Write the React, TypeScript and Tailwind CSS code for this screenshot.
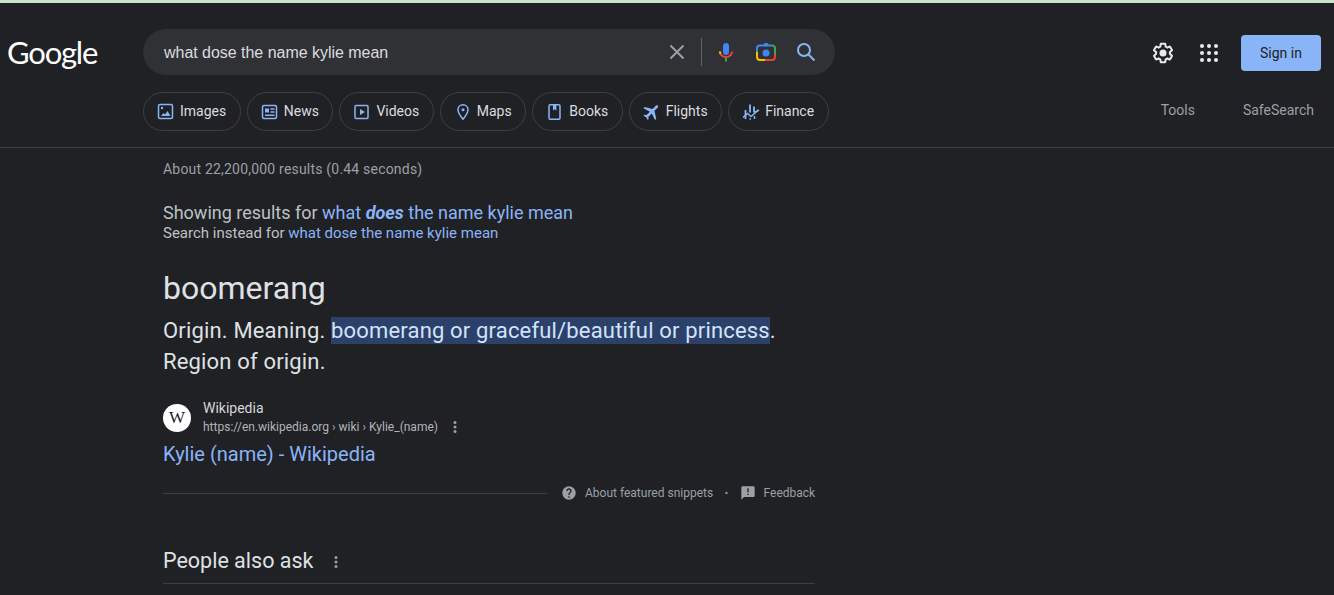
const ACCENT = "#8ab4f8";

const ImagesIcon = () => (
  <svg width="18" height="18" viewBox="0 0 18 18" fill="none">
    <rect x="1.500" y="1.500" width="14" height="14" rx="1.500" stroke={ACCENT} strokeWidth="1.500" />
    <circle cx="5" cy="5" r="1.200" fill={ACCENT} />
    <path d="M4 13l2.500-3 1.500 1.500L10.500 8 13.500 13z" fill={ACCENT} />
  </svg>
);

const NewsIcon = () => (
  <svg width="18" height="18" viewBox="0 0 18 18" fill="none">
    <rect x="1.500" y="2.500" width="14" height="13" rx="1.500" stroke={ACCENT} strokeWidth="1.500" />
    <rect x="4" y="5.500" width="4" height="4" fill={ACCENT} />
    <path d="M9.500 6h4M9.500 9h4M4 12.200h9.500" stroke={ACCENT} strokeWidth="1.500" />
  </svg>
);

const VideosIcon = () => (
  <svg width="18" height="18" viewBox="0 0 18 18" fill="none">
    <rect x="2" y="2.500" width="13" height="13" rx="1" stroke={ACCENT} strokeWidth="1.500" />
    <path d="M7 6l5 3-5 3z" fill={ACCENT} />
  </svg>
);

const MapsIcon = () => (
  <svg width="18" height="18" viewBox="0 0 18 18" fill="none">
    <path d="M9 1.800c-2.900 0-5 2.200-5 5 0 3.400 5 9.400 5 9.400s5-6 5-9.400c0-2.800-2.100-5-5-5z" stroke={ACCENT} strokeWidth="1.500" />
    <circle cx="9" cy="6.800" r="1.500" fill={ACCENT} />
  </svg>
);

const BooksIcon = () => (
  <svg width="18" height="18" viewBox="0 0 18 18" fill="none">
    <rect x="3" y="1.800" width="11" height="14.500" rx="1.200" stroke={ACCENT} strokeWidth="1.500" />
    <path d="M7 2v5.500l1.700-1.200 1.700 1.200V2z" fill={ACCENT} />
  </svg>
);

const FlightsIcon = () => (
  <svg width="18" height="18" viewBox="0 0 24 24" fill={ACCENT}>
    <path transform="rotate(45 12 12) translate(-1.800 -1.800) scale(1.150)" d="M21 16v-2l-8-5V3.500c0-.83-.67-1.500-1.500-1.500S10 2.670 10 3.500V9l-8 5v2l8-2.500V19l-2 1.500V22l3.500-1 3.500 1v-1.500L13 19v-5.500l8 2.500z" />
  </svg>
);

const FinanceIcon = () => (
  <svg width="18" height="18" viewBox="0 0 18 18" fill="none" stroke={ACCENT} strokeWidth="1.800">
    <path d="M3.500 7v9M8 1.500v8M12 3.500v6" />
    <path d="M1 14.500l4.500-4 3.500 3L16.500 7" strokeWidth="1.500" />
    <path d="M12.500 9.500L17 7M7.500 16h1.500M12.500 13v3" strokeWidth="1.500" />
  </svg>
);

const Chip = ({ label, icon }: { label: string; icon: React.ReactNode }) => (
  <a className="flex h-[39px] items-center gap-[5px] rounded-full border border-[#3c4043] pl-[13px] pr-[13.500px] text-[14px] text-[#dadce0]">
    {icon}
    <span>{label}</span>
  </a>
);

const Dots = ({ className }: { className?: string }) => (
  <svg className={className} width="14" height="14" viewBox="0 0 14 14" fill="#9aa0a6">
    <circle cx="7" cy="2.500" r="1.500" />
    <circle cx="7" cy="7" r="1.500" />
    <circle cx="7" cy="11.500" r="1.500" />
  </svg>
);

export default function App() {
  return (
    <div className="h-[595px] overflow-hidden bg-[#202124] font-['Roboto',sans-serif]">
      <div className="h-[3px] bg-[#c8e6c9]" />
      <header className="h-[145px] border-b border-[#3c4043] pt-[26px]">
        <div className="flex h-[46px] items-center">
          <div className="w-[143px] pl-[7px] font-['Lato',sans-serif] text-[31px] leading-none tracking-[-1.200px] text-white">
            Google
          </div>
          <div className="flex h-[46px] w-[692px] items-center rounded-full bg-[#303134] pl-[21px] pr-[17px]">
            <span className="flex-1 pt-px font-['Liberation_Sans',sans-serif] text-[16px] tracking-[-0.030px] text-[#dadce0]">
              what dose the name kylie mean
            </span>
            <svg width="24" height="24" viewBox="0 0 24 24" fill="none" stroke="#9aa0a6" strokeWidth="2">
              <path d="M5.500 5.500l13 13M18.500 5.500l-13 13" />
            </svg>
            <div className="ml-[12px] mr-[12px] h-[28px] w-px bg-[#5f6368]" />
            <svg width="24" height="24" viewBox="0 0 24 24">
              <path d="M12 15c1.700 0 3-1.300 3-3V6c0-1.700-1.300-3-3-3S9 4.300 9 6v6c0 1.700 1.300 3 3 3z" fill="#4285f4" />
              <path d="M5 11.500c0 3.700 3.100 6.500 7 6.500s7-2.800 7-6.500h-2c0 2.600-2.200 4.500-5 4.500s-5-1.900-5-4.500z" fill="#ea4335" />
              <path d="M5 11.500h2c0 .6.100 1.200.4 1.700l-1.700 1c-.4-.8-.7-1.700-.7-2.700z" fill="#fbbc04" />
              <rect x="11" y="18" width="2" height="3.500" fill="#34a853" />
            </svg>
            <svg className="ml-[16px]" width="24" height="24" viewBox="0 0 24 24" fill="none">
              <circle cx="12" cy="13" r="3.500" fill="#4285f4" />
              <path d="M9 5.500l1.500-2.500h3L15 5.500" fill="#4285f4" />
              <path d="M3 12V8c0-1.400 1.100-2.500 2.500-2.500H18" stroke="#4285f4" strokeWidth="2" />
              <path d="M3 12v4.500C3 18.400 4.100 20 6 20h5" stroke="#fbbc04" strokeWidth="2" />
              <path d="M11 20h7c1.900 0 3-1.600 3-3.500V14" stroke="#ea4335" strokeWidth="2" />
              <path d="M18 5.500c1.900 0 3 1.100 3 2.500v6" stroke="#34a853" strokeWidth="2" />
            </svg>
            <svg className="ml-[16px]" width="24" height="24" viewBox="0 0 24 24" fill="none" stroke={ACCENT} strokeWidth="2">
              <circle cx="10" cy="10" r="6" />
              <path d="M14.500 14.500l6 6" />
            </svg>
          </div>
          <div className="ml-auto flex items-center pr-[13px] pt-[2px]">
            <svg width="24" height="24" viewBox="0 0 24 24" fill="#e8eaed">
              <path d="M13.850 22.250h-3.700c-.74 0-1.360-.54-1.450-1.270l-.27-1.890c-.27-.14-.53-.29-.79-.46l-1.800.72c-.7.260-1.470-.03-1.810-.65L2.200 15.530c-.35-.66-.2-1.440.36-1.880l1.530-1.190c-.01-.15-.02-.3-.02-.46 0-.15.01-.31.02-.46l-1.520-1.190c-.59-.45-.74-1.260-.37-1.880l1.850-3.190c.34-.62 1.110-.9 1.790-.63l1.810.73c.26-.17.520-.32.780-.46l.27-1.910c.09-.7.710-1.250 1.440-1.250h3.700c.74 0 1.360.54 1.450 1.270l.27 1.890c.27.140.53.290.79.46l1.800-.72c.71-.26 1.480.03 1.820.65l1.840 3.180c.36.660.2 1.440-.36 1.880l-1.520 1.190c.01.150.02.300.02.460s-.01.310-.02.460l1.520 1.190c.560.450.720 1.230.370 1.860l-1.860 3.220c-.34.620-1.110.900-1.800.630l-1.800-.720c-.26.170-.52.320-.78.460l-.27 1.910c-.1.680-.72 1.220-1.450 1.220zm-3.230-2h2.760l.37-2.550.53-.22c.44-.18.88-.44 1.340-.78l.45-.34 2.380.96 1.380-2.400-2.030-1.580.07-.56c.03-.26.060-.51.060-.78s-.03-.530-.060-.780l-.07-.560 2.030-1.580-1.390-2.400-2.390.960-.450-.350c-.420-.320-.870-.580-1.330-.770l-.520-.220-.370-2.550h-2.760l-.37 2.550-.530.210c-.440.190-.880.440-1.340.790l-.450.330-2.380-.950-1.390 2.390 2.030 1.580-.070.560c-.030.260-.060.530-.060.780s.020.520.060.780l.070.560-2.030 1.580 1.380 2.400 2.390-.960.450.350c.430.330.860.580 1.330.770l.530.220.380 2.550z" />
              <circle cx="12" cy="12" r="3.500" />
            </svg>
            <svg className="ml-[22px]" width="24" height="24" viewBox="0 0 24 24" fill="#e8eaed">
              {[5, 12, 19].flatMap((y) =>
                [5, 12, 19].map((x) => <circle key={`${x}-${y}`} cx={x} cy={y} r="2" />)
              )}
            </svg>
            <a className="ml-[20px] flex h-[36px] w-[80px] items-center justify-center rounded-[4px] bg-[#8ab4f8] text-[14px] text-[#202124]">
              Sign in
            </a>
          </div>
        </div>
        <nav className="mt-[17px] flex items-center pl-[143px]">
          <div className="flex gap-[6px]">
            <Chip label="Images" icon={<ImagesIcon />} />
            <Chip label="News" icon={<NewsIcon />} />
            <Chip label="Videos" icon={<VideosIcon />} />
            <Chip label="Maps" icon={<MapsIcon />} />
            <Chip label="Books" icon={<BooksIcon />} />
            <Chip label="Flights" icon={<FlightsIcon />} />
            <Chip label="Finance" icon={<FinanceIcon />} />
          </div>
          <div className="ml-auto flex gap-[48px] pb-[2px] pr-[20px] text-[14px] text-[#9aa0a6]">
            <span>Tools</span>
            <span>SafeSearch</span>
          </div>
        </nav>
      </header>

      <main className="ml-[163px] w-[652px]">
        <p className="mt-[11px] text-[14px] leading-[20px] tracking-[0.200px] text-[#9aa0a6]">About 22,200,000 results (0.44 seconds)</p>
        <div className="mt-[23px]">
          <p className="text-[18px] leading-[22px] text-[#bdc1c6]">
            Showing results for{" "}
            <a className="text-[#8ab4f8]">
              what <b className="italic">does</b> the name kylie mean
            </a>
          </p>
          <p className="text-[15px] leading-[18px] text-[#bdc1c6]">
            Search instead for <a className="text-[#8ab4f8]">what dose the name kylie mean</a>
          </p>
        </div>
        <h2 className="mt-[28px] text-[32px] leading-[36px] text-[#dfe1e5]">boomerang</h2>
        <p className="mt-[9px] w-[640px] text-[22px] leading-[31px] tracking-[0.170px] text-[#dfe1e5]">
          Origin. Meaning. <span className="bg-[#2c4169] py-px text-[#d2e3fc]">boomerang or graceful/beautiful or princess</span>.
          <br />
          Region of origin.
        </p>
        <div className="mt-[22px] flex items-center">
          <div className="flex h-[28px] w-[28px] items-center justify-center rounded-full bg-white font-['Liberation_Serif',serif] text-[17px] text-[#202124]">
            W
          </div>
          <div className="ml-[12px]">
            <div className="text-[14px] leading-[19px] text-[#d5d7da]">Wikipedia</div>
            <div className="flex h-[18px] items-center text-[12px] text-[#b0b4b9]">
              https://en.wikipedia.org › wiki › Kylie_(name)
              <Dots className="ml-[10px]" />
            </div>
          </div>
        </div>
        <a className="mt-[5px] block text-[20px] leading-[26px] text-[#8ab4f8]">Kylie (name) - Wikipedia</a>
        <div className="mt-[14px] flex h-[24px] items-center whitespace-nowrap text-[12px] text-[#9aa0a6]">
          <div className="h-px w-[384px] shrink-0 bg-[#3c4043]" />
          <svg className="ml-[14px] shrink-0" width="16" height="16" viewBox="0 0 24 24" fill="#9aa0a6">
            <path d="M12 2C6.480 2 2 6.480 2 12s4.480 10 10 10 10-4.480 10-10S17.520 2 12 2zm1 17h-2v-2h2v2zm2.070-7.750l-.9.920C13.450 12.900 13 13.500 13 15h-2v-.5c0-1.100.45-2.100 1.170-2.830l1.240-1.260c.37-.36.590-.86.590-1.410 0-1.100-.9-2-2-2s-2 .9-2 2H8c0-2.210 1.790-4 4-4s4 1.790 4 4c0 .88-.36 1.680-.93 2.250z" />
          </svg>
          <span className="ml-[8px]">About featured snippets</span>
          <span className="mx-[11.500px] text-[10px]">•</span>
          <svg className="shrink-0" width="16" height="16" viewBox="0 0 24 24" fill="#9aa0a6">
            <path d="M20 2H4c-1.100 0-1.990.9-1.990 2L2 22l4-4h14c1.100 0 2-.9 2-2V4c0-1.100-.9-2-2-2zm-7 9h-2V5h2v6zm0 4h-2v-2h2v2z" />
          </svg>
          <span className="ml-[8px]">Feedback</span>
        </div>
        <div className="mt-[37px] flex h-[42px] items-center border-b border-[#3c4043] pb-[2px]">
          <span className="text-[21.500px] text-[#dfe1e5]">People also ask</span>
          <Dots className="ml-[16px]" />
        </div>
      </main>
    </div>
  );
}
